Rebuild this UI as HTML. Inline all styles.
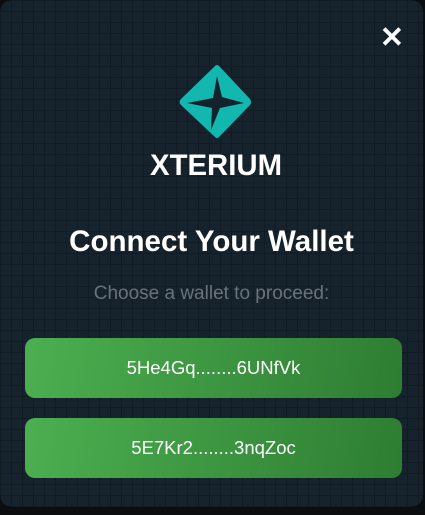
<!DOCTYPE html>
<html><head><style>
html,body{margin:0;padding:0;background:#0b0d0f;width:425px;height:515px;overflow:hidden;font-family:"Liberation Sans",sans-serif}
.p{position:absolute;left:0;top:0;width:423px;height:507px;border-radius:12px;background-color:#16232d;
background-image:linear-gradient(#101b23 1px,transparent 1px),linear-gradient(90deg,#101b23 1px,transparent 1px);background-size:11px 11px;overflow:hidden}
.x{position:absolute;right:19px;top:24px;color:#fff;font-size:29px;font-weight:bold;line-height:28px}
.t{position:absolute;left:0;width:100%;text-align:center;color:#fff}
.b{position:absolute;left:25px;width:377px;height:60px;border-radius:10px;background:linear-gradient(100deg,#4caf50,#2e7d32);color:#fff;font-size:18.5px;text-align:center;line-height:60px}
</style></head><body>
<div class="p">
<div class="x">✕</div>
<svg style="position:absolute;left:0;top:0" width="425" height="200">
<path d="M215 66 Q217 64 219 66 L250 99 Q252 102 250 105 L219 137 Q217 139 215 137 L181 105 Q178 102 181 99 Z" fill="#12b8b0"/>
<path d="M217 76 L222 97 L244 103 L220 108 L211 130 L212 108 L187 103 L213 98 Z" fill="#13222c"/>
<text x="216" y="175" text-anchor="middle" fill="#fff" font-size="30" font-weight="bold" font-family="Liberation Sans, sans-serif" textLength="132" lengthAdjust="spacingAndGlyphs">XTERIUM</text>
</svg>
<div class="t" style="top:225px;font-size:29.5px;font-weight:bold">Connect Your Wallet</div>
<div class="t" style="top:283px;font-size:19px;color:#6b7278">Choose a wallet to proceed:</div>
<div class="b" style="top:338px">5He4Gq........6UNfVk</div>
<div class="b" style="top:418px">5E7Kr2........3nqZoc</div>
</div>
</body></html>
